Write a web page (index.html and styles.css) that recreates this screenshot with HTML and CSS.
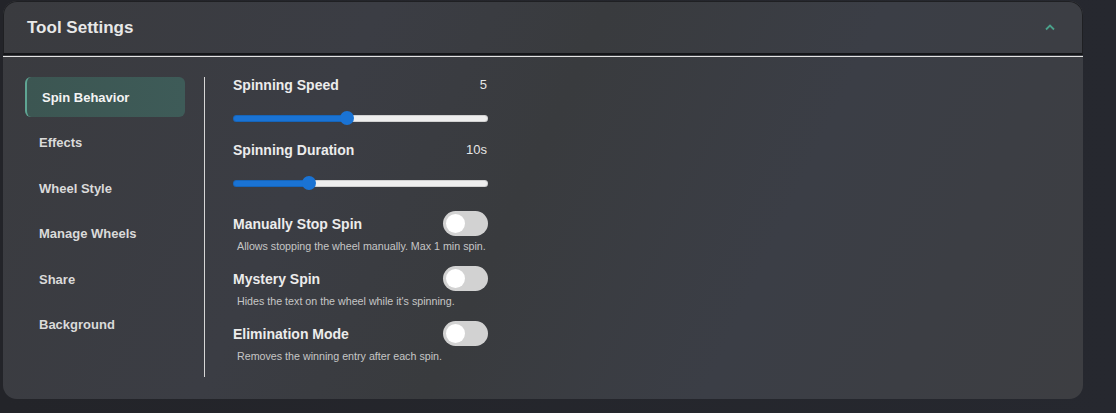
FILE: index.html
```html
<!DOCTYPE html>
<html lang="en">
<head>
  <meta charset="UTF-8">
  <title>Tool Settings</title>
  <link rel="stylesheet" href="styles.css">
</head>
<body>

  <div class="card">
    <div class="card-header">
      <h2>Tool Settings</h2>
      <svg class="chevron" width="12" height="8" viewBox="0 0 12 8">
        <polyline points="2,6.5 6,2.5 10,6.5" fill="none" stroke="#4aa08a" stroke-width="1.8"/>
      </svg>
    </div>

    <div class="card-body">
      <nav class="menu">
        <div class="menu-item active">Spin Behavior</div>
        <div class="menu-item">Effects</div>
        <div class="menu-item">Wheel Style</div>
        <div class="menu-item">Manage Wheels</div>
        <div class="menu-item">Share</div>
        <div class="menu-item">Background</div>
      </nav>

      <div class="divider"></div>

      <div class="panel">
        <div class="range-setting">
          <div class="range-head"><span class="label">Spinning Speed</span><span class="value">5</span></div>
          <input type="range" min="1" max="10" value="5" style="--fill: 45%">
        </div>
        <div class="range-setting">
          <div class="range-head"><span class="label">Spinning Duration</span><span class="value">10s</span></div>
          <input type="range" min="2" max="30" value="10" style="--fill: 30%">
        </div>

        <div class="toggle-setting">
          <div class="toggle-row">
            <span class="label">Manually Stop Spin</span>
            <span class="switch"><span class="knob"></span></span>
          </div>
          <p class="desc">Allows stopping the wheel manually. Max 1 min spin.</p>
        </div>
        <div class="toggle-setting">
          <div class="toggle-row">
            <span class="label">Mystery Spin</span>
            <span class="switch"><span class="knob"></span></span>
          </div>
          <p class="desc">Hides the text on the wheel while it's spinning.</p>
        </div>
        <div class="toggle-setting">
          <div class="toggle-row">
            <span class="label">Elimination Mode</span>
            <span class="switch"><span class="knob"></span></span>
          </div>
          <p class="desc">Removes the winning entry after each spin.</p>
        </div>
      </div>
    </div>
  </div>

</body>
</html>
```

FILE: styles.css
```css
body {
  margin: 0;
  padding: 1px 33px 14px 3px;
  background: linear-gradient(to right, #232429, #26282f);
  font-family: "Liberation Sans", Arial, sans-serif;
  height: 413px;
  box-sizing: border-box;
  overflow: hidden;
}

.card {
  width: 1080px;
  height: 398px;
  border-radius: 14px;
  overflow: hidden;
  background: linear-gradient(115deg, #3a3b3f 0%, #3b3d44 30%, #393b3e 48%, #3b3e46 70%, #3d3e42 100%);
}

.card-header {
  height: 51px;
  display: flex;
  align-items: center;
  justify-content: space-between;
  padding: 0 26px 0 23px;
  border: 1px solid #1f2023;
  border-bottom: 2px solid #141518;
  border-radius: 14px 14px 0 0;
}

.card-header h2 {
  margin: 0;
  font-size: 17px;
  font-weight: bold;
  color: #e8e8e8;
}

.chevron { margin-top: -1px; }

.card-body {
  margin-top: 1px;
  border-top: 1px solid #e4e4e4;
  display: flex;
  padding: 20px 0 0 22px;
}

.menu {
  width: 160px;
  display: flex;
  flex-direction: column;
  gap: 5.5px;
}

.menu-item {
  height: 40px;
  display: flex;
  align-items: center;
  padding-left: 14px;
  font-size: 13px;
  font-weight: bold;
  color: #dadada;
  border-radius: 6px;
}

.menu-item.active {
  background: linear-gradient(to right, #3c5652, #3e5b58);
  border-left: 2px solid #5fa593;
  padding-left: 15px;
  color: #f4f4f4;
}

.divider {
  width: 1px;
  height: 300px;
  background: #d6d6d6;
  margin-left: 19px;
}

.panel {
  width: 255px;
  margin-left: 28px;
  display: flex;
  flex-direction: column;
}

.label {
  font-size: 14px;
  font-weight: bold;
  color: #ececec;
}

.range-head {
  display: flex;
  justify-content: space-between;
  line-height: 16px;
}

.value {
  font-size: 13px;
  color: #e6e6e6;
  padding-right: 1px;
}

.range-setting input {
  -webkit-appearance: none;
  appearance: none;
  display: block;
  width: 100%;
  height: 14px;
  margin: 18px 0 17px;
  background: transparent;
}

.range-setting input::-webkit-slider-runnable-track {
  height: 7px;
  border-radius: 4px;
  background: linear-gradient(to right, #1a73d4 var(--fill), #eeeeee var(--fill));
  box-shadow: inset 0 0 0 1px rgba(0, 0, 0, 0.12);
}

.range-setting input::-webkit-slider-thumb {
  -webkit-appearance: none;
  width: 14px;
  height: 14px;
  margin-top: -3.5px;
  border-radius: 50%;
  background: #1a73d4;
}

.range-setting + .toggle-setting { margin-top: 4px; }

.toggle-setting { margin-bottom: 13px; }

.toggle-row {
  display: flex;
  justify-content: space-between;
  align-items: center;
  height: 25px;
}

.switch {
  width: 45px;
  height: 25px;
  border-radius: 13px;
  background: #d2d2d2;
  display: flex;
  align-items: center;
  padding-left: 3px;
  box-sizing: border-box;
}

.knob {
  width: 19px;
  height: 19px;
  border-radius: 50%;
  background: #ffffff;
}

.desc {
  margin: 3px 0 0;
  padding-left: 4px;
  font-size: 10.7px;
  line-height: 14px;
  white-space: nowrap;
  color: #c6c6c6;
}
```
